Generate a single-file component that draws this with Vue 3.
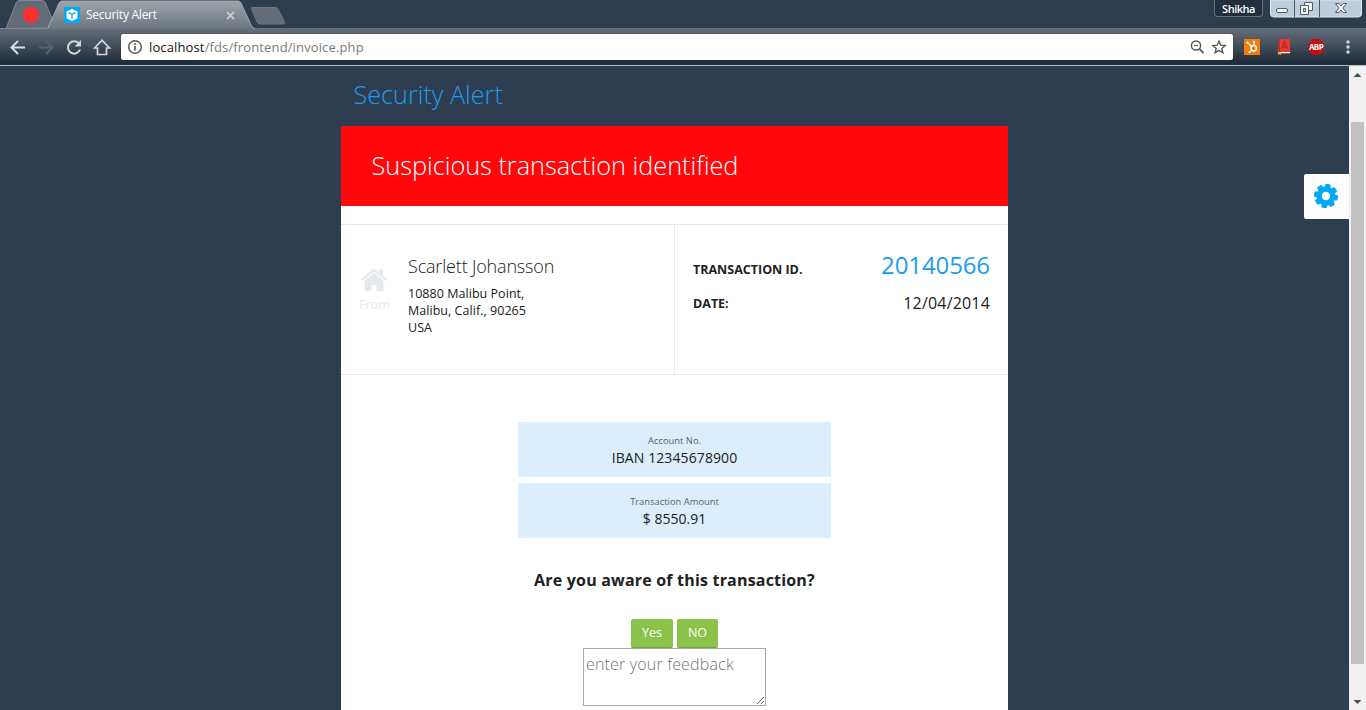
<script setup>
const tiles = [
  { label: 'Account No.', value: 'IBAN 12345678900', kind: 'iban' },
  { label: 'Transaction Amount', value: '$ 8550.91', kind: 'amount' }
]
const address = ['10880 Malibu Point,', 'Malibu, Calif., 90265', 'USA']
const gearTeeth = [10, 55, 100, 145, 190, 235, 280, 325]
</script>

<template>
  <div class="window">
    <header class="chrome">
      <svg class="tab-shapes" width="1366" height="32" viewBox="0 0 1366 32">
        <defs>
          <linearGradient id="tabFill" x1="0" y1="0" x2="0" y2="1">
            <stop offset="0" stop-color="#a0a5ac" />
            <stop offset="1" stop-color="#6b747e" />
          </linearGradient>
        </defs>
        <path d="M6 28.5L16.500 2Q17.500 .5 19 .5H42Q44 .5 45 2L52 18L48 28Z" fill="#626b76" stroke="#7f8790" />
        <path d="M0 28.500H48" stroke="#808892" fill="none" />
        <path d="M48 29L59 3Q60 1 62 1H238Q240 1 241 3L251 25Q252 28 255 29Z" fill="url(#tabFill)" />
        <path d="M48 28L59 3Q60 1 62 1H238Q240 1 241 3L251 25Q252 28 255 28.500" fill="none" stroke="#a1a7ae" />
        <path d="M252 7.500H275Q277 7.500 278 9L284.500 22Q285 24 283.500 24H260Q258 24 257 22L251.500 9Q251 7.500 252 7.500Z" fill="#626b76" stroke="#6c7580" />
      </svg>
      <div class="tabs">
        <i class="record"></i>
        <svg class="favicon" width="16" height="16" viewBox="0 0 16 16">
          <path d="M0 0H16V16H0Z" fill="#03a9f4" />
          <path d="M8 2L13.500 4.500V11.300L8 14L2.500 11.300V4.500Z" fill="#fff" />
          <path d="M4.300 5.600L8 7.300L11.700 5.600M8 7.300V11.700" fill="none" stroke="#03a9f4" stroke-width="1.300" />
        </svg>
        <span class="tab-title">Security Alert</span>
        <svg class="tab-close" width="9" height="9" viewBox="0 0 9 9"><path d="M1 1L8 8M8 1L1 8" stroke="#d0d3d6" stroke-width="1.700" /></svg>
        <span class="profile">Shikha</span>
        <div class="controls">
          <svg width="93" height="18" viewBox="0 0 93 18">
            <path d="M.5 0V14Q.5 17 4 17H88Q91.500 17 91.500 14V0Z" fill="#c0cddd" stroke="#e2e8ef" />
            <path d="M24.500 0V17M49.500 0V17" stroke="#4a5868" />
            <rect x="6.500" y="8.500" width="11" height="4" rx="1.500" fill="#f6f7f9" stroke="#535b66" />
            <path d="M34.500 2.500H42.500V10.500H34.500Z" fill="#f6f7f9" stroke="#535b66" />
            <path d="M30.500 5.500H38.500V14.500H30.500Z" fill="#f6f7f9" stroke="#535b66" />
            <path d="M33.500 8.500H35.500V11.500H33.500Z" fill="#c0cddd" stroke="#535b66" />
            <path d="M65.500 3.500H69L71 6L73 3.500H76.500L73 8L76.500 12.500H73L71 10L69 12.500H65.500L69 8Z" fill="#f6f7f9" stroke="#535b66" />
          </svg>
        </div>
      </div>
      <div class="toolbar">
        <svg width="121" height="36" viewBox="0 0 121 36" fill="none" stroke-width="2">
          <path d="M25 18.500H12M18 12L11.500 18.500L18 25" stroke="#dadbdc" />
          <path d="M39 18.500H52M46 12L52.500 18.500L46 25" stroke="#56616e" />
          <path d="M79.200 14.800A6.200 6.200 0 1 0 80 20.500" stroke="#d4d6d8" />
          <path d="M81 11V17.500H74.500Z" fill="#d4d6d8" />
          <path d="M94.500 19L102 11.300L109.500 19H106.500V25.500H97.500V19Z" stroke="#d4d6d8" stroke-width="1.700" />
        </svg>
        <div class="omnibox">
          <svg width="16" height="16" viewBox="0 0 16 16" fill="none" stroke="#5a5a5a">
            <circle cx="8" cy="8" r="6.300" stroke-width="1.500" />
            <path d="M8 7V11.500M8 4.300V6" stroke-width="1.700" />
          </svg>
          <span class="url"><b>localhost</b>/fds/frontend/invoice.php</span>
          <svg class="omni-icons" width="38" height="18" viewBox="0 0 38 18" fill="none" stroke="#5a5a5a">
            <circle cx="7" cy="7.500" r="4.600" stroke-width="1.500" />
            <path d="M5 7.500H9" stroke-width="1.200" />
            <path d="M10.300 10.800L14.500 15" stroke-width="1.800" />
            <path d="M30 3L31.700 7.200L36.200 7.500L32.800 10.400L33.900 14.800L30 12.400L26.100 14.800L27.200 10.400L23.800 7.500L28.300 7.200Z" stroke-width="1.400" />
          </svg>
        </div>
        <div class="extensions">
          <svg width="16" height="16" viewBox="0 0 16 16">
            <rect width="16" height="16" fill="#f57c0b" />
            <circle cx="9.700" cy="9.300" r="2.700" fill="none" stroke="#fff" stroke-width="1.500" />
            <path d="M10 6.500V3M7.800 7.500L3.500 3.800M7.600 11.200L5.500 13.300" stroke="#fff" stroke-width="1.200" />
            <circle cx="3.400" cy="3.600" r="1.200" fill="#fff" /><circle cx="10" cy="2.900" r="1.200" fill="#fff" /><circle cx="5.300" cy="13.300" r="1" fill="#fff" />
          </svg>
          <svg class="book" width="14" height="16" viewBox="0 0 14 16">
            <path d="M0 1L2 0V14H0Z" fill="#3b5262" />
            <path d="M1 0H3V13H1Z" fill="#a8352f" />
            <path d="M3 0H13V13H3Z" fill="#e53935" />
            <path d="M4.500 10L7.500 3L10.500 10M5.500 8H9.500" fill="none" stroke="#bd2529" stroke-width="1.400" />
            <path d="M3 13H13V14.500H3Z" fill="#fff" /><path d="M2 14.500H13V15.500H2Z" fill="#842321" />
            <path d="M1 13H4V16L2.500 15L1 16Z" fill="#f1bd19" />
          </svg>
          <div class="abp">
            <svg width="16" height="16" viewBox="0 0 16 16"><path d="M4.700 0H11.300L16 4.700V11.300L11.300 16H4.700L0 11.300V4.700Z" fill="#c70d14" /></svg>
            <span>ABP</span>
          </div>
          <svg class="menu" width="4" height="16" viewBox="0 0 4 16" fill="#d4d6d8"><circle cx="2" cy="3" r="1.700" /><circle cx="2" cy="8" r="1.700" /><circle cx="2" cy="13" r="1.700" /></svg>
        </div>
      </div>
    </header>

    <div class="viewport">
      <main class="page">
        <div class="column">
          <h1>Security Alert</h1>
          <section class="invoice">
            <h2>Suspicious transaction identified</h2>
            <div class="info">
              <div class="from">
                <div class="from-icon">
                  <svg width="28" height="24" viewBox="0 0 28 24" fill="#e6eaed">
                    <path d="M14 4.800L23.500 12.700V22Q23.500 23 22.500 23H16.500V17H11.500V23H5.500Q4.500 23 4.500 22V12.700Z" />
                    <path d="M12.700 1.500Q14 .5 15.300 1.500L19 4.600V2Q19 1.300 19.700 1.300H22.300Q23 1.300 23 2V8L27.300 11.600L26 13.300L14 3.500L2 13.300L.7 11.600Z" />
                  </svg>
                  <span>From</span>
                </div>
                <div class="person">
                  <h3>Scarlett Johansson</h3>
                  <p v-for="line in address" :key="line">{{ line }}</p>
                </div>
              </div>
              <dl class="meta">
                <div class="meta-row"><dt>TRANSACTION ID.</dt><dd class="number">20140566</dd></div>
                <div class="meta-row"><dt>DATE:</dt><dd class="date">12/04/2014</dd></div>
              </dl>
            </div>
            <div class="tiles">
              <div v-for="t in tiles" :key="t.label" class="tile">
                <span class="tile-label">{{ t.label }}</span>
                <span class="tile-value" :class="t.kind">{{ t.value }}</span>
              </div>
            </div>
            <h4>Are you aware of this transaction?</h4>
            <div class="buttons">
              <button class="yes">Yes</button>
              <button class="no">NO</button>
            </div>
            <textarea placeholder="enter your feedback"></textarea>
          </section>
        </div>
        <div class="settings">
          <svg width="26" height="26" viewBox="-13 -13 26 26" fill="#03a9f4">
            <path v-for="a in gearTeeth" :key="a" d="M-3.200 -8L-2.500 -12H2.500L3.200 -8Z" :transform="`rotate(${a})`" />
            <circle r="6.800" fill="none" stroke="#03a9f4" stroke-width="5.200" />
          </svg>
        </div>
      </main>
      <div class="scrollbar">
        <svg width="17" height="17" viewBox="0 0 17 17"><path d="M4.500 11L8.500 7L12.500 11Z" fill="#505050" /></svg>
        <div class="thumb"></div>
        <svg width="17" height="17" viewBox="0 0 17 17"><path d="M4.500 7L8.500 11L12.500 7Z" fill="#505050" /></svg>
      </div>
    </div>
  </div>
</template>

<style>
body { margin: 0; overflow: hidden; }
</style>

<style scoped>
* { box-sizing: border-box; }
h1, h2, h3, h4, p, dl, dd { margin: 0; font-weight: 400; }
.window { width: 1366px; height: 710px; display: flex; flex-direction: column; overflow: hidden; font-family: "Open Sans", sans-serif; color: #212121; }
svg { display: block; flex: none; }
.chrome { position: relative; height: 66px; flex: none; background: linear-gradient(#2e3d4e 0 28px, #66707b 28px, #1e2b3a 63px, #223345 65px, #b5bcc3 65px); }
.tab-shapes { position: absolute; left: 0; top: 0; }
.tabs { position: relative; display: flex; height: 28px; align-items: flex-start; }
.record { width: 16px; height: 16px; border-radius: 50%; background: #fd3030; margin: 7px 0 0 23px; flex: none; }
.favicon { margin: 7px 0 0 25px; }
.tab-title { width: 140px; margin: 5px 0 0 6px; font-size: 12px; line-height: 20px; letter-spacing: -.25px; color: #fff; }
.tab-close { margin-top: 11px; }
.profile { width: 49px; height: 17px; margin-left: auto; margin-right: 7px; border: 1px solid #66707c; border-top: 0; border-radius: 0 0 4px 4px; background: #222e3b; color: #fff; font-size: 11px; line-height: 17px; font-weight: 600; letter-spacing: -.5px; text-align: center; }
.controls { width: 96px; }
.toolbar { position: relative; display: flex; align-items: center; height: 37px; }
.omnibox { width: 1112px; height: 26px; margin-top: 1px; background: #fff; border-radius: 2px; display: flex; align-items: center; padding-left: 6px; box-shadow: 0 0 1px #111; }
.url { margin-left: 6px; font-size: 13px; line-height: 24px; letter-spacing: .13px; color: #7a7a7a; }
.url b { font-weight: 400; color: #111; }
.omni-icons { margin-left: auto; margin-right: 6px; }
.extensions { display: flex; align-items: center; margin-left: 11px; }
.book { margin-left: 17px; }
.abp { position: relative; margin-left: 17px; }
.abp span { position: absolute; inset: 0; display: flex; justify-content: center; align-items: center; font: bold 8px/16px "Open Sans", sans-serif; letter-spacing: -.6px; color: #fff; }
.menu { margin-left: 22px; }

.viewport { display: flex; height: 644px; }
.page { flex: 1; display: flex; background: #2e3e50; }
.column { width: 667px; margin-left: 341px; }
h1 { height: 60px; padding-left: 12.500px; font-size: 25.200px; line-height: 56px; font-weight: 300; color: #1c9cf1; }
.invoice { height: 584px; background: #fff; display: flex; flex-direction: column; align-items: center; }
h2 { align-self: stretch; height: 80px; padding-left: 30.500px; background: #ff070b; color: #fff; font-size: 25.250px; line-height: 79px; font-weight: 300; }
.info { align-self: stretch; flex: none; display: flex; margin-top: 18px; height: 151px; border-top: 1px solid #e5e9ec; border-bottom: 1px solid #e5e9ec; }
.from { width: 334px; display: flex; border-right: 1px solid #e5e9ec; }
.from-icon { width: 67px; display: flex; flex-direction: column; align-items: center; padding-top: 43px; font-size: 13px; line-height: 24px; letter-spacing: -.2px; color: #e6eaed; }
.from-icon svg { margin-right: 1px; }
.person { font-size: 12.500px; letter-spacing: .04px; }
h3 { margin-top: 28px; font-size: 18px; line-height: 27px; font-weight: 300; letter-spacing: -.18px; }
.person p { line-height: 17px; }
.person h3 + p { margin-top: 5px; }
.meta { flex: 1; padding: 24px 18px 0; }
.meta-row { display: flex; justify-content: space-between; height: 34px; line-height: 42px; }
dt { font-size: 12.500px; font-weight: 700; }
dd { text-align: right; }
.number { font-size: 24px; line-height: 32px; letter-spacing: -.1px; color: #1c9cf1; }
.date { font-size: 16px; line-height: 40px; letter-spacing: .18px; }
.tiles { display: grid; gap: 6px; margin-top: 47px; }
.tile { width: 313px; height: 55px; padding-top: 10px; background: #dbeefd; display: flex; flex-direction: column; align-items: center; }
.tile-label { font-size: 9.400px; line-height: 17px; color: #59626a; }
.tile-value { font-size: 14px; line-height: 18px; }
.iban { letter-spacing: .1px; }
h4 { margin-top: 29px; font-size: 16px; line-height: 26px; font-weight: 700; letter-spacing: .19px; }
.buttons { display: flex; gap: 4px; margin-top: 26px; }
button { height: 29px; padding: 0; border: 0; border-bottom: 1px solid #72a83b; border-radius: 2px; background: #8bc34a; color: #fff; font: 500 12.500px/28px "Open Sans", sans-serif; }
.yes { width: 42px; }
.no { width: 41px; }
textarea { display: block; width: 183px; height: 58px; padding: 2px; border: 1px solid #a9a9a9; border-radius: 0; resize: both; font: 300 16px/27px "Open Sans", sans-serif; letter-spacing: .17px; overflow: hidden; }
textarea::placeholder { color: #757575; opacity: 1; }
.settings { width: 45px; height: 45px; margin: 108px 0 0 auto; padding: 0 1px 1px 0; border-radius: 2px 0 0 2px; background: #fff; display: flex; align-items: center; justify-content: center; }
.scrollbar { width: 17px; display: flex; flex-direction: column; background: #f1f1f1; }
.thumb { width: 13px; height: 542px; margin: 39px 2px auto; background: #c1c1c1; flex: none; }
</style>
